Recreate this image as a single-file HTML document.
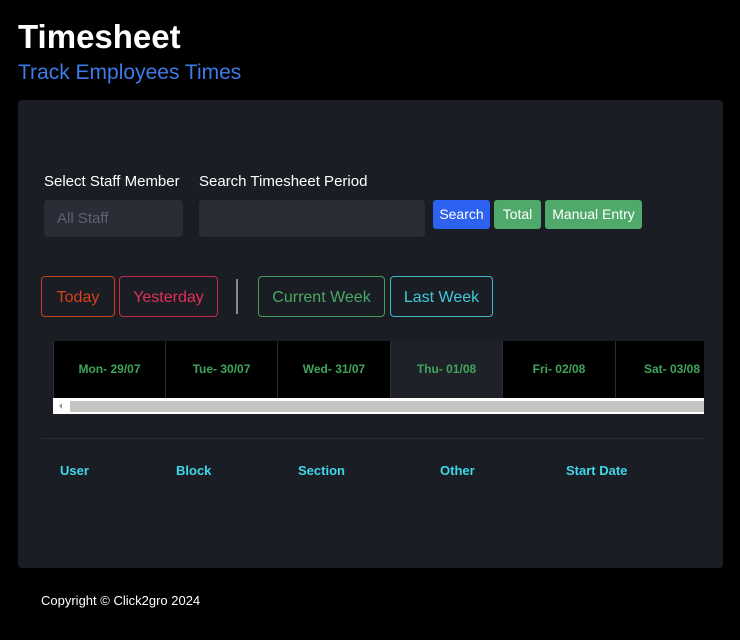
<!DOCTYPE html>
<html><head><style>
body{margin:0;width:740px;height:640px;background:#000;font-family:"Liberation Sans",sans-serif;position:relative;overflow:hidden}
.a{position:absolute}
h1{position:absolute;left:18px;top:18px;margin:0;font-size:33px;font-weight:bold;color:#fff}
.sub{left:18px;top:61px;font-size:21px;color:#3d7be8}
.card{left:18px;top:100px;width:705px;height:468px;background:#1b1d24;border-radius:4px}
.lbl{font-size:15px;color:#fff;top:173px}
.inp{background:#2a2d36;border-radius:4px;top:200px;height:37px}
.btn{top:200px;height:29px;border-radius:3px;color:#fff;font-size:14px;line-height:29px;text-align:center}
.ob{top:276px;height:41px;border:1px solid;border-radius:4px;font-size:16px;line-height:41px;text-align:center;box-sizing:border-box;background:transparent}
.cell{top:341px;height:57px;background:#000;border-right:1px solid #2a2d36;box-sizing:border-box;color:#3fa55c;font-size:12px;font-weight:bold;line-height:57px;text-align:center}
.th{top:463px;color:#3fd8e8;font-size:13px;font-weight:bold}
</style></head><body>
<h1>Timesheet</h1>
<div class="a sub">Track Employees Times</div>
<div class="a card"></div>
<div class="a lbl" style="left:44px">Select Staff Member</div>
<div class="a lbl" style="left:199px">Search Timesheet Period</div>
<div class="a inp" style="left:44px;width:139px"><span style="position:absolute;left:13px;top:10px;color:#5d6178;font-size:15px">All Staff</span></div>
<div class="a inp" style="left:199px;width:226px"></div>
<div class="a btn" style="left:433px;width:57px;background:#2d62f0">Search</div>
<div class="a btn" style="left:494px;width:47px;background:#4ea96a">Total</div>
<div class="a btn" style="left:545px;width:97px;background:#4ea96a">Manual Entry</div>
<div class="a ob" style="left:41px;width:74px;border-color:#c8401c;color:#d8421c">Today</div>
<div class="a ob" style="left:119px;width:99px;border-color:#c8274c;color:#e0305a">Yesterday</div>
<div class="a" style="left:236px;top:279px;width:2px;height:35px;background:#888"></div>
<div class="a ob" style="left:258px;width:127px;border-color:#3f9d58;color:#48a862">Current Week</div>
<div class="a ob" style="left:390px;width:103px;border-color:#3fb8c8;color:#40c8d8">Last Week</div>
<div class="a" style="left:53px;top:341px;width:651px;height:1px;background:#2a2d36"></div>
<div class="a cell" style="left:53px;width:113px;border-left:1px solid #2a2d36">Mon- 29/07</div>
<div class="a cell" style="left:166px;width:112px">Tue- 30/07</div>
<div class="a cell" style="left:278px;width:113px">Wed- 31/07</div>
<div class="a cell" style="left:391px;width:112px;background:#1f2129">Thu- 01/08</div>
<div class="a cell" style="left:503px;width:113px">Fri- 02/08</div>
<div class="a cell" style="left:616px;width:88px;border-right:0;text-align:left;padding-left:28px">Sat- 03/08</div>
<div class="a" style="left:53px;top:398px;width:651px;height:16px;background:#fff"></div>
<div class="a" style="left:70px;top:401px;width:634px;height:11px;background:#c4c4c4"></div>
<div class="a" style="left:59px;top:403px;width:0;height:0;border:3px solid transparent;border-right:3px solid #999;border-left:0"></div>
<div class="a" style="left:41px;top:438px;width:663px;height:1px;background:#2a2d36"></div>
<div class="a th" style="left:60px">User</div>
<div class="a th" style="left:176px">Block</div>
<div class="a th" style="left:298px">Section</div>
<div class="a th" style="left:440px">Other</div>
<div class="a th" style="left:566px">Start Date</div>
<div class="a" style="left:41px;top:593px;color:#fff;font-size:13px">Copyright © Click2gro 2024</div>
</body></html>
